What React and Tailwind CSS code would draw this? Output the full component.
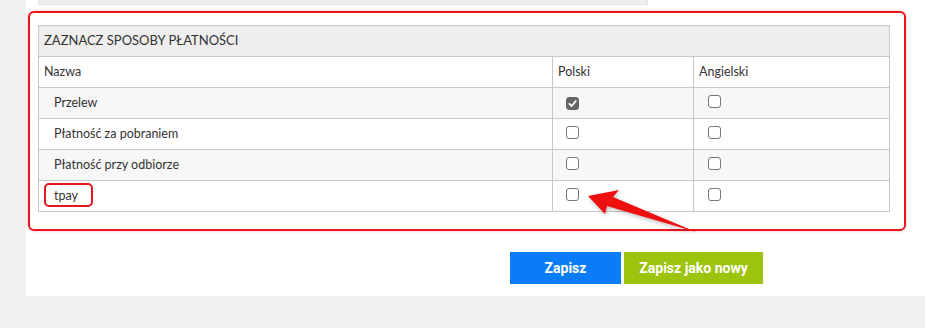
const rows = [
  { name: "Przelew", pl: true, en: false },
  { name: "Płatność za pobraniem", pl: false, en: false },
  { name: "Płatność przy odbiorze", pl: false, en: false },
  { name: "tpay", pl: false, en: false, marked: true },
];

const Box = ({ checked }) => (
  <span
    className={
      "inline-flex items-center justify-center w-[13px] h-[13px] rounded-[3px] border " +
      (checked ? "bg-[#666] border-[#666]" : "bg-white border-[#777]")
    }
  >
    {checked && (
      <svg width="9" height="9" viewBox="0 0 10 10">
        <path d="M1.5 5.3 L4 7.8 L8.6 2.3" stroke="#fff" strokeWidth="2" fill="none" strokeLinecap="round" strokeLinejoin="round" />
      </svg>
    )}
  </span>
);

export default function App() {
  return (
    <div className="relative w-[925px] h-[328px] bg-[#f1f1f1] pl-[26px] overflow-hidden" style={{ fontFamily: "Lato, 'Open Sans', sans-serif" }}>
      <div className="bg-white h-[296px] w-full">
        <div className="ml-[12px] w-[610px] h-[5px] bg-[#eeeeee] border-b border-x border-[#e2e2e2]" />

        <div className="mt-[6px] ml-[2px] w-[878px] h-[220px] border-2 border-[#e8171f] rounded-[6px] pl-[8px] pt-[12px] shadow-[0_0_3px_rgba(230,20,30,0.35)]">
          <table className="w-[852px] border-collapse text-[12.5px] text-[#333]">
            <thead>
              <tr className="h-[31px] bg-[#eeeeee]">
                <th colSpan={3} className="border border-[#c8c8c8] text-left font-normal pl-[5px] text-[13px] text-[#333]">
                  ZAZNACZ SPOSOBY PŁATNOŚCI
                </th>
              </tr>
              <tr className="h-[31px] bg-white">
                <th className="border border-[#c8c8c8] text-left font-normal pl-[5px] w-[514px]">Nazwa</th>
                <th className="border border-[#c8c8c8] text-left font-normal pl-[5px] w-[141px]">Polski</th>
                <th className="border border-[#c8c8c8] text-left font-normal pl-[5px]">Angielski</th>
              </tr>
            </thead>
            <tbody>
              {rows.map((r, i) => (
                <tr key={r.name} className={"h-[31px] " + (i % 2 === 0 ? "bg-[#f7f7f7]" : "bg-white")}>
                  <td className="border border-[#c8c8c8] pl-[15px] pt-[1px]">
                    {r.marked ? (
                      <span className="relative">
                        {r.name}
                        <span className="absolute -left-[10px] -top-[5px] w-[49px] h-[24px] border-2 border-[#e8171f] rounded-[5px]" />
                      </span>
                    ) : (
                      r.name
                    )}
                  </td>
                  <td className="border border-[#c8c8c8] pl-[13px] pt-[2px]">
                    <Box checked={r.pl} />
                  </td>
                  <td className="border border-[#c8c8c8] pl-[14px] pt-[2px]">
                    <Box checked={r.en} />
                  </td>
                </tr>
              ))}
            </tbody>
          </table>
        </div>

        <div className="flex gap-[3px] mt-[21px] ml-[484px]" style={{ fontFamily: "Roboto, sans-serif" }}>
          <button className="w-[111px] h-[32px] bg-[#0a7cf6] text-white font-bold text-[14px]">Zapisz</button>
          <button className="w-[139px] h-[32px] bg-[#9dc40c] text-white font-bold text-[14px]">Zapisz jako nowy</button>
        </div>
      </div>

      <svg className="absolute left-0 top-0 pointer-events-none" width="925" height="328">
        <polygon
          points="588,196 619,190 613,197 696,232 607,206 605,214"
          fill="#ee0f0f"
          style={{ filter: "drop-shadow(1px 2px 2px rgba(0,0,0,0.25))" }}
        />
      </svg>
    </div>
  );
}
